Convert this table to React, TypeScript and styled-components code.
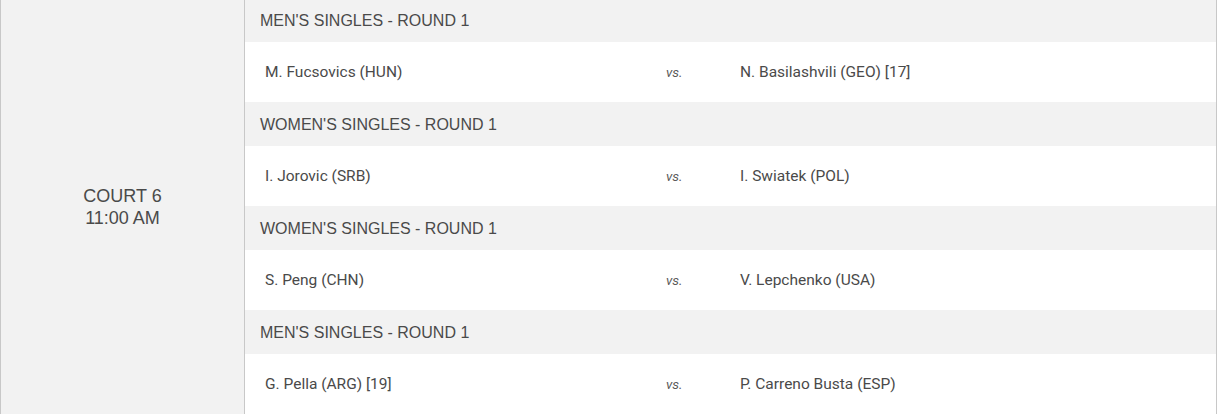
import styled, { createGlobalStyle } from 'styled-components';

interface IMatch {
  event: string;
  home: string;
  away: string;
}

const matches: IMatch[] = [
  { event: "MEN'S SINGLES - ROUND 1", home: 'M. Fucsovics (HUN)', away: 'N. Basilashvili (GEO) [17]' },
  { event: "WOMEN'S SINGLES - ROUND 1", home: 'I. Jorovic (SRB)', away: 'I. Swiatek (POL)' },
  { event: "WOMEN'S SINGLES - ROUND 1", home: 'S. Peng (CHN)', away: 'V. Lepchenko (USA)' },
  { event: "MEN'S SINGLES - ROUND 1", home: 'G. Pella (ARG) [19]', away: 'P. Carreno Busta (ESP)' },
];

function App() {
  return (
    <>
      <GlobalStyle />
      <Schedule>
        <Court>
          COURT 6
          <br />
          11:00 AM
        </Court>
        <Matches>
          {matches.map((match, idx) => (
            <div key={idx}>
              <EventRow>{match.event}</EventRow>
              <MatchRow>
                <Player>{match.home}</Player>
                <Versus>vs.</Versus>
                <Player>{match.away}</Player>
              </MatchRow>
            </div>
          ))}
        </Matches>
      </Schedule>
    </>
  );
}

const GlobalStyle = createGlobalStyle`
  html, body {
    margin: 0;
    padding: 0;
    background: #fff;
    overflow: hidden;
  }
`;

const Schedule = styled.div`
  display: flex;
  width: 1215px;
  margin-top: -2px;
  border-left: 1px solid #c8c8c8;
  border-right: 1px solid #c8c8c8;
  background-color: #f2f2f2;
`;

const Court = styled.div`
  display: flex;
  align-items: center;
  justify-content: center;
  width: 243px;
  padding-top: 2px;
  border-right: 1px solid #c8c8c8;
  text-align: center;
  font-family: 'Liberation Sans', Arial, sans-serif;
  font-size: 18px;
  line-height: 22px;
  color: #4a4a4a;
`;

const Matches = styled.div`
  flex: 1;
`;

const EventRow = styled.div`
  height: 44px;
  box-sizing: border-box;
  padding: 2px 0 0 15px;
  display: flex;
  align-items: center;
  background-color: #f2f2f2;
  font-family: 'Liberation Sans', Arial, sans-serif;
  font-size: 16px;
  color: #4a4a4a;
`;

const MatchRow = styled.div`
  display: grid;
  grid-template-columns: 401px 74px 1fr;
  align-items: center;
  height: 60px;
  padding-left: 20px;
  background-color: #fff;
`;

const Player = styled.span`
  font-family: Roboto, 'Liberation Sans', sans-serif;
  font-size: 15.5px;
  color: #4a4a4a;
`;

const Versus = styled.span`
  font-family: Roboto, 'Liberation Sans', sans-serif;
  font-style: italic;
  font-size: 13.5px;
  color: #5a5a5a;
`;

export default App;
